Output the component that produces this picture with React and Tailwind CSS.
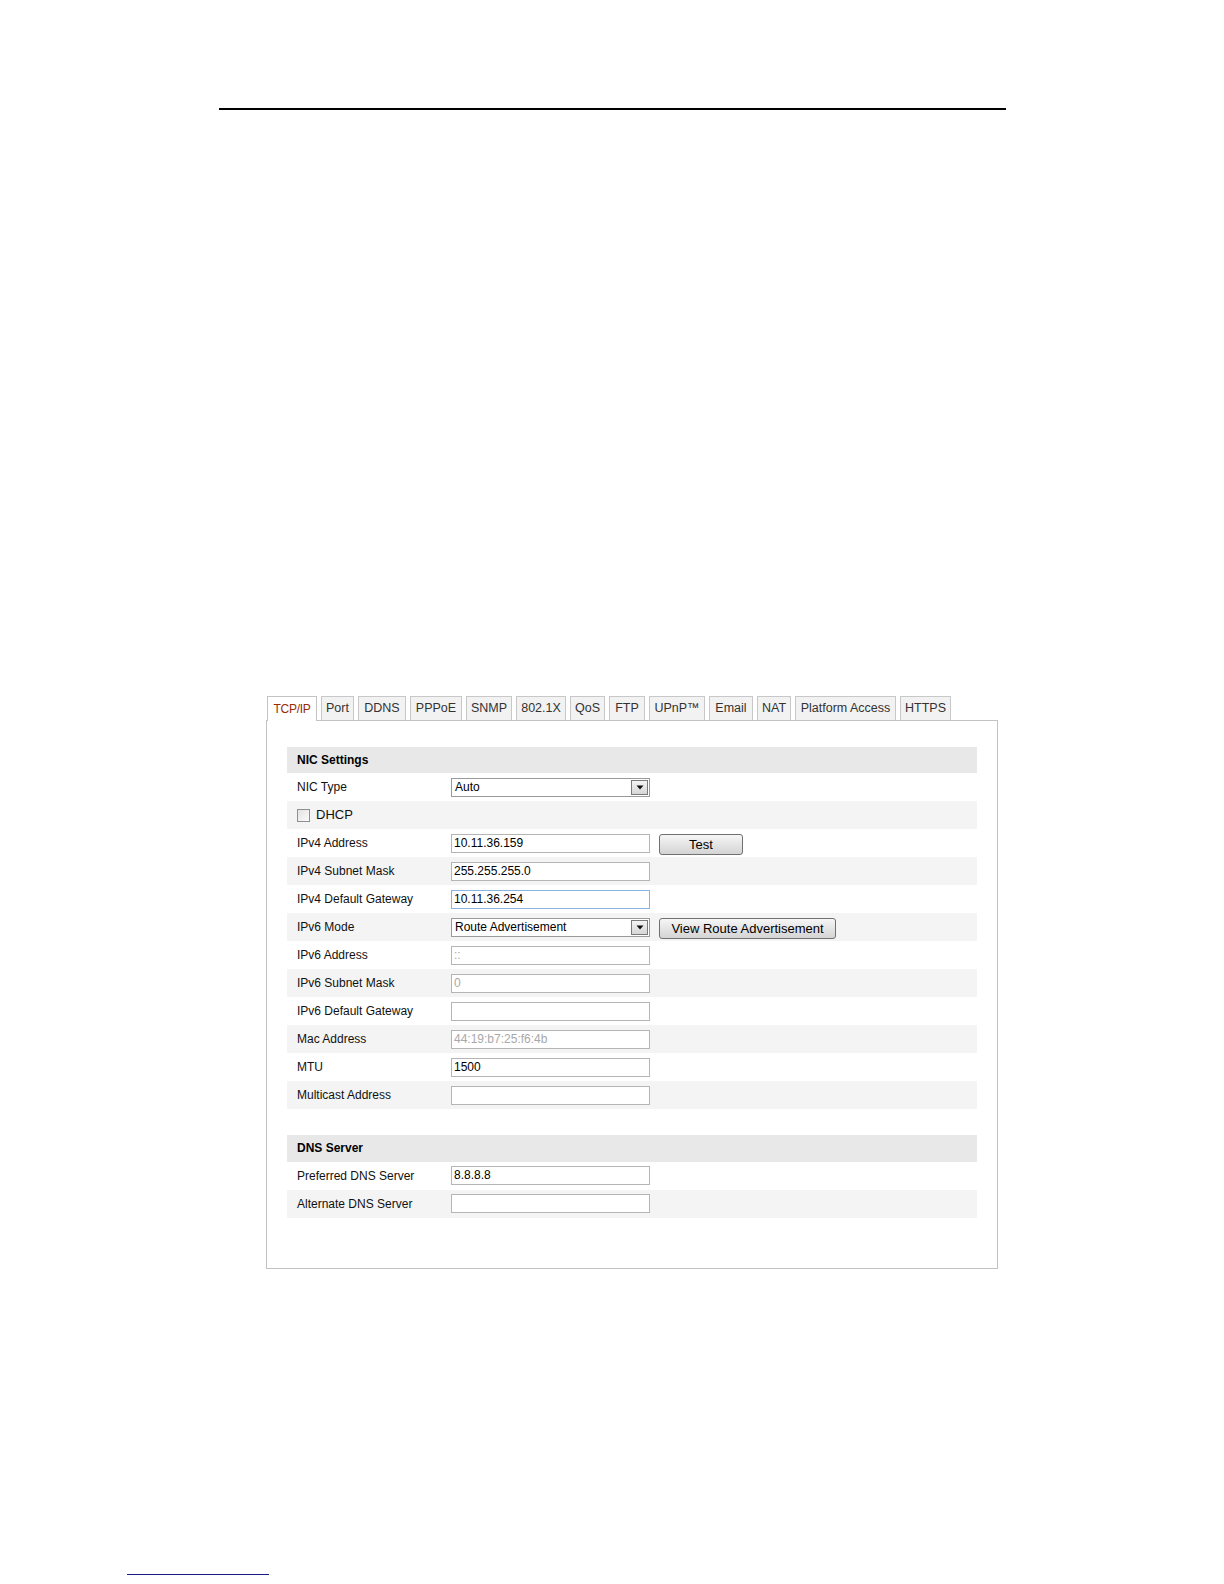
import React from "react";

const tabs = [
  ["TCP/IP", "w-[50px]"],
  ["Port", "w-[33px]"],
  ["DDNS", "w-[48px]"],
  ["PPPoE", "w-[52px]"],
  ["SNMP", "w-[46px]"],
  ["802.1X", "w-[50px]"],
  ["QoS", "w-[35px]"],
  ["FTP", "w-[36px]"],
  ["UPnP™", "w-[56px]"],
  ["Email", "w-[44px]"],
  ["NAT", "w-[34px]"],
  ["Platform Access", "w-[101px]"],
  ["HTTPS", "w-[51px]"],
];

function Input({ value = "", disabled, focus }) {
  return (
    <div
      className={
        "w-[199px] h-[19px] border bg-white pl-[2px] text-[12px] leading-[17px] " +
        (focus ? "border-[#86b5e4] " : "border-[#b5b5b5] ") +
        (disabled ? "text-[#a8a8a8]" : "text-black")
      }
    >
      {value}
    </div>
  );
}

function Select({ value }) {
  return (
    <div className="w-[199px] h-[19px] border border-[#9a9a9a] bg-white flex items-center">
      <span className="flex-1 pl-[3px] text-[12px] leading-[17px] text-black">{value}</span>
      <span className="w-[17px] h-[15px] mr-[1px] border border-[#7a7a7a] bg-gradient-to-b from-[#f4f4f4] to-[#d6d6d6] flex items-center justify-center">
        <svg width="8" height="5" viewBox="0 0 8 5">
          <path d="M0.5 0.5 L7.5 0.5 L4 4.5 Z" fill="#111" />
        </svg>
      </span>
    </div>
  );
}

function Button({ children, w }) {
  return (
    <div
      className={
        w +
        " ml-[9px] mt-[3px] h-[21px] rounded-[3px] border border-[#707070] bg-gradient-to-b from-[#f6f6f6] to-[#d4d4d4] flex items-center justify-center text-[13px] text-black"
      }
    >
      {children}
    </div>
  );
}

function Row({ label, shaded, children }) {
  return (
    <div className={"h-[28px] flex items-center " + (shaded ? "bg-[#f4f4f4]" : "bg-white")}>
      <div className="w-[164px] pl-[10px] text-[12px] text-[#111]">{label}</div>
      {children}
    </div>
  );
}

function Header({ children }) {
  return (
    <div className="h-[26.5px] bg-[#e8e8e8] flex items-center pl-[10px] text-[12px] font-bold text-black">
      {children}
    </div>
  );
}

export default function App() {
  return (
    <div className="w-[1224px] h-[1584px] bg-white overflow-hidden" style={{ fontFamily: '"Liberation Sans", Arial, sans-serif' }}>
      <div className="ml-[219px] mt-[108px] w-[787px] h-[1.5px] bg-black" />

      <div className="ml-[267px] mt-[586px] w-[731px]">
        <div className="flex gap-[4px] items-end relative z-10">
          {tabs.map(([t, w], i) =>
            i === 0 ? (
              <div key={t} className={w + " h-[25px] border border-b-0 border-[#c3c3c3] bg-white flex items-center justify-center text-[12px] font-medium text-[#9a2a00] -mb-px tracking-[-0.3px]"}>
                {t}
              </div>
            ) : (
              <div key={t} className={w + " h-[24px] border border-b-0 border-[#c8c8c8] bg-[#f2f2f2] flex items-center justify-center text-[12.5px] text-[#333]"}>
                {t}
              </div>
            )
          )}
        </div>

        <div className="-ml-px h-[549px] border border-[#c3c3c3] pt-[26px] pl-[20px] pr-[20px]">
          <Header>NIC Settings</Header>
          <Row label="NIC Type">
            <Select value="Auto" />
          </Row>
          <div className="h-[28px] flex items-center bg-[#f4f4f4] pl-[10px]">
            <span className="w-[13px] h-[13px] border border-[#8e8f8f] bg-gradient-to-br from-[#e2e2e2] to-[#fbfbfb]" />
            <span className="ml-[6px] text-[13px] text-[#111]">DHCP</span>
          </div>
          <Row label="IPv4 Address">
            <Input value="10.11.36.159" />
            <Button w="w-[84px]">Test</Button>
          </Row>
          <Row label="IPv4 Subnet Mask" shaded>
            <Input value="255.255.255.0" />
          </Row>
          <Row label="IPv4 Default Gateway">
            <Input value="10.11.36.254" focus />
          </Row>
          <Row label="IPv6 Mode" shaded>
            <Select value="Route Advertisement" />
            <Button w="w-[177px]">View Route Advertisement</Button>
          </Row>
          <Row label="IPv6 Address">
            <Input value="::" disabled />
          </Row>
          <Row label="IPv6 Subnet Mask" shaded>
            <Input value="0" disabled />
          </Row>
          <Row label="IPv6 Default Gateway">
            <Input />
          </Row>
          <Row label="Mac Address" shaded>
            <Input value="44:19:b7:25:f6:4b" disabled />
          </Row>
          <Row label="MTU">
            <Input value="1500" />
          </Row>
          <Row label="Multicast Address" shaded>
            <Input />
          </Row>

          <div className="mt-[26px]">
            <Header>DNS Server</Header>
            <Row label="Preferred DNS Server">
              <Input value="8.8.8.8" />
            </Row>
            <Row label="Alternate DNS Server" shaded>
              <Input />
            </Row>
          </div>
        </div>
      </div>

      <div className="ml-[127px] mt-[305px] w-[142px] h-[1.5px] bg-[#1a1a8a]" />
    </div>
  );
}
